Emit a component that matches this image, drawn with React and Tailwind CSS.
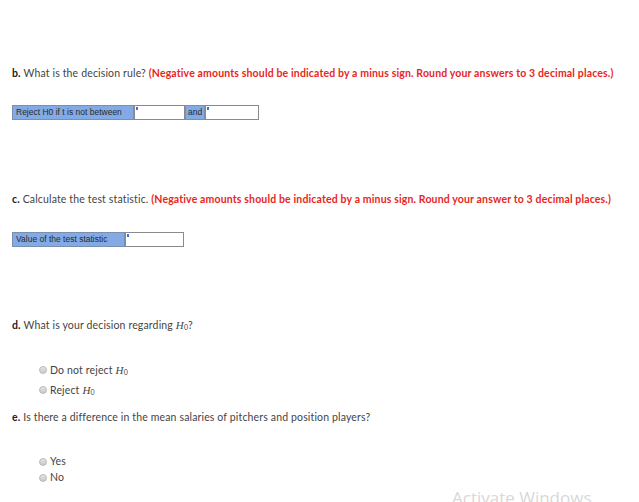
import React from "react";

const H0 = () => (
  <span>
    <i className="font-['Liberation_Serif',serif] text-[11px]">H</i>
    <sub className="text-[7px] relative top-[1px]">0</sub>
  </span>
);

const Input = ({ w }) => (
  <div className={`relative h-full bg-white border border-[#8a8a8a] ${w}`}>
    <span className="absolute left-[1px] top-[1px] w-[2px] h-[3px] bg-[#3d6fd6]" />
  </div>
);

const Radio = ({ children }) => (
  <div className="flex items-center gap-[3px]">
    <span className="w-[8px] h-[8px] rounded-full border border-[#b9b9b9] bg-gradient-to-b from-[#e4e4e4] to-[#c9c9c9]" />
    <span>{children}</span>
  </div>
);

export default function App() {
  return (
    <div className="relative w-[639px] h-[502px] overflow-hidden bg-white font-['Lato',sans-serif] text-[10.5px] tracking-[0.15px] text-[#444]">
      <div className="pl-[12px] pt-[67px] flex flex-col">
        {/* part b */}
        <p className="leading-[12px] whitespace-nowrap">
          <span className="font-bold text-[#222]">b.</span> What is the decision rule?{" "}
          <span className="font-bold text-[#e8261c]">
            (Negative amounts should be indicated by a minus sign. Round your answers to 3 decimal places.)
          </span>
        </p>
        <div className="mt-[26px] flex h-[15px] font-['Liberation_Sans',sans-serif] text-[8.5px] tracking-normal text-[#2a2a2a]">
          <div className="w-[122px] bg-[#83aae4] border border-[#7a8fb0] flex items-center pl-[3px]">
            Reject H0 if t is not between
          </div>
          <Input w="w-[51px]" />
          <div className="w-[20px] bg-[#83aae4] border border-[#7a8fb0] flex items-center pl-[2px]">and</div>
          <Input w="w-[54px]" />
        </div>

        {/* part c */}
        <p className="mt-[73px] leading-[12px] whitespace-nowrap">
          <span className="font-bold text-[#222]">c.</span> Calculate the test statistic.{" "}
          <span className="font-bold text-[#e8261c]">
            (Negative amounts should be indicated by a minus sign. Round your answer to 3 decimal places.)
          </span>
        </p>
        <div className="mt-[27px] flex h-[15px] font-['Liberation_Sans',sans-serif] text-[8.5px] tracking-normal text-[#2a2a2a]">
          <div className="w-[113px] bg-[#83aae4] border border-[#7a8fb0] flex items-center pl-[3px]">
            Value of the test statistic
          </div>
          <Input w="w-[59px]" />
        </div>

        {/* part d */}
        <p className="mt-[72px] leading-[12px] whitespace-nowrap">
          <span className="font-bold text-[#222]">d.</span> What is your decision regarding <H0 />?
        </p>
        <div className="mt-[29px] pl-[27px] flex flex-col">
          <div className="h-[20px] flex items-center">
            <Radio>
              Do not reject <H0 />
            </Radio>
          </div>
          <div className="h-[20px] flex items-center">
            <Radio>
              Reject <H0 />
            </Radio>
          </div>
        </div>

        {/* part e */}
        <p className="mt-[11px] leading-[12px] whitespace-nowrap">
          <span className="font-bold text-[#222]">e.</span> Is there a difference in the mean salaries of pitchers and position players?
        </p>
        <div className="mt-[31px] pl-[27px] flex flex-col">
          <div className="h-[16px] flex items-center">
            <Radio>Yes</Radio>
          </div>
          <div className="h-[16px] flex items-center">
            <Radio>No</Radio>
          </div>
        </div>
      </div>

      {/* windows watermark */}
      <div className="absolute left-[452px] top-[485px] font-['Open_Sans',sans-serif] text-[17px] tracking-normal text-[#d8d8d8] whitespace-nowrap">
        Activate Windows
      </div>
    </div>
  );
}
